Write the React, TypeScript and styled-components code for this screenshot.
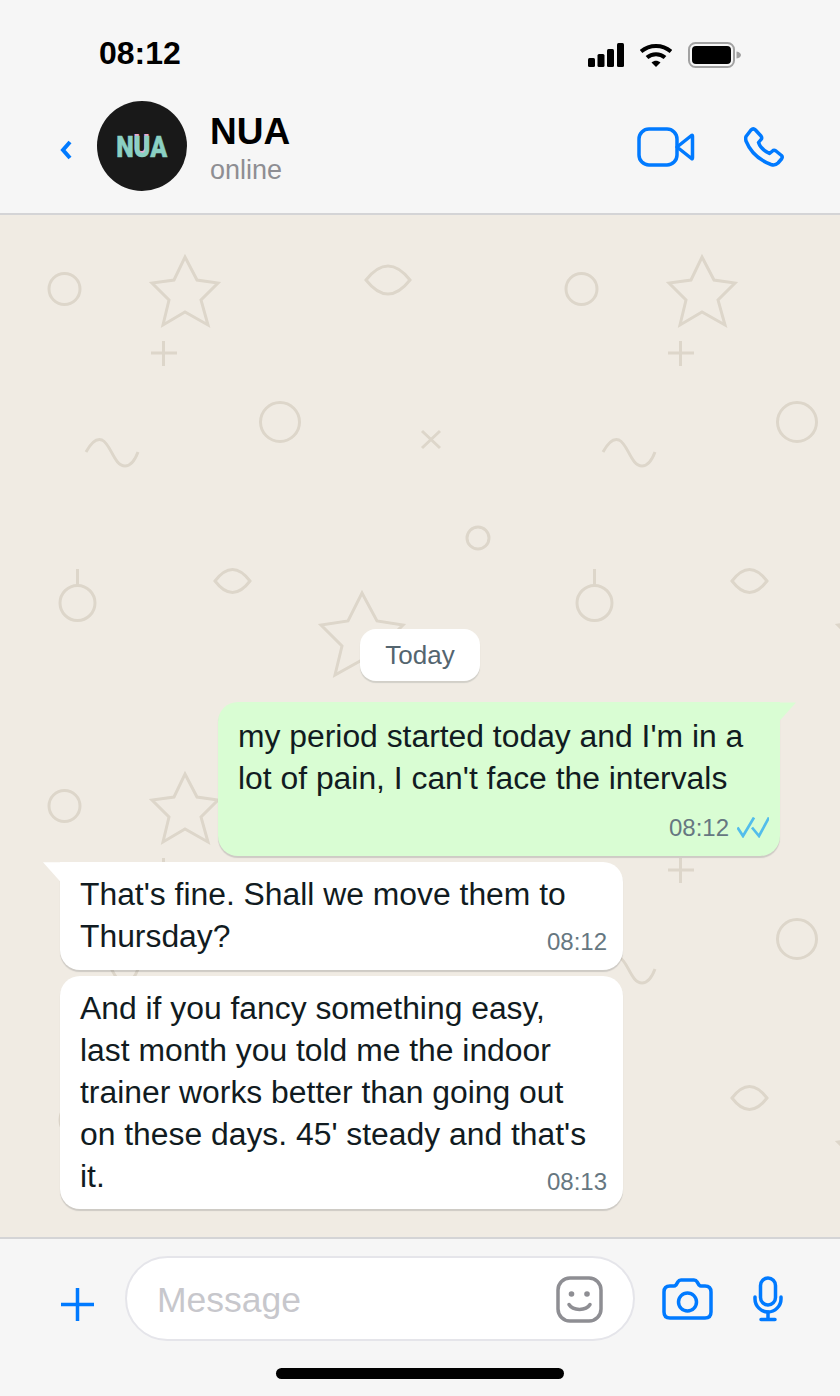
import styled, { createGlobalStyle } from 'styled-components';

const GlobalStyle = createGlobalStyle`
  html, body {
    margin: 0;
    padding: 0;
    background: #f6f6f6;
  }
  * {
    box-sizing: border-box;
  }
`;

const Screen = styled.div`
  width: 840px;
  height: 1396px;
  display: flex;
  flex-direction: column;
  overflow: hidden;
  font-family: 'Liberation Sans', Arial, sans-serif;
  background: #f6f6f6;
`;

const StatusBar = styled.div`
  height: 92px;
  flex: none;
  display: flex;
  align-items: flex-end;
  justify-content: space-between;
  padding: 0 99px 22px 99px;
`;

const Clock = styled.span`
  font-size: 32px;
  line-height: 34px;
  font-weight: 700;
  color: #000;
`;

const StatusIcons = styled.div`
  display: flex;
  align-items: center;
  gap: 16px;
  margin-bottom: 2px;
`;

const Header = styled.header`
  height: 123px;
  flex: none;
  display: flex;
  align-items: flex-start;
  padding: 9px 56px 0 60px;
  border-bottom: 2px solid #d4d4d6;
`;

const BackButton = styled.div`
  display: flex;
  width: 37px;
  padding-top: 38px;
`;

const Avatar = styled.div`
  width: 90px;
  height: 90px;
  flex: none;
  border-radius: 50%;
  background: #191919;
  display: flex;
  align-items: center;
  justify-content: center;
`;

const Logo = styled.div`
  display: flex;
  font-family: 'Roboto', 'Liberation Sans', sans-serif;
  font-weight: 900;
  font-size: 30px;
  line-height: 24px;
  color: #8bd0c3;
  -webkit-text-stroke: 0.5px #8bd0c3;
  transform: scaleX(0.83);
  margin-top: 2px;
`;

const LogoU = styled.span`
  text-shadow: -0.5px -2.5px 0 #eaa7d0;
`;

const Contact = styled.div`
  flex: 1;
  display: flex;
  flex-direction: column;
  padding: 11px 0 0 23px;
`;

const ContactName = styled.div`
  font-size: 37px;
  line-height: 40px;
  font-weight: 700;
  color: #000;
`;

const ContactStatus = styled.div`
  font-size: 27px;
  line-height: 37px;
  color: #8e8e93;
`;

const HeaderActions = styled.div`
  display: flex;
  align-items: center;
  gap: 49px;
  padding-top: 26px;
`;

const Chat = styled.main`
  position: relative;
  flex: 1;
  min-height: 0;
  display: flex;
  flex-direction: column;
  justify-content: flex-end;
  padding: 0 60px 28px;
  background: #f0ebe3;
`;

const Wallpaper = styled.svg`
  position: absolute;
  inset: 0;
  width: 100%;
  height: 100%;
`;

const DayPill = styled.div`
  position: relative;
  align-self: center;
  width: 120px;
  height: 52px;
  margin-bottom: 21px;
  border-radius: 16px;
  background: #fff;
  box-shadow: 0 2px 1px rgba(11, 20, 26, 0.13);
  color: #54656f;
  font-size: 26px;
  line-height: 52px;
  text-align: center;
`;

const Bubble = styled.div<{ $out?: boolean; $tail?: boolean }>`
  position: relative;
  display: flow-root;
  width: ${(p) => (p.$out ? '562px' : '563px')};
  margin-bottom: 6px;
  padding: ${(p) => (p.$out ? '13px 20px 11.600px' : '11px 20px 12px')};
  align-self: ${(p) => (p.$out ? 'flex-end' : 'flex-start')};
  border-radius: 20px;
  border-top-right-radius: ${(p) => (p.$out ? '0' : '20px')};
  border-top-left-radius: ${(p) => (p.$tail && !p.$out ? '0' : '20px')};
  background: ${(p) => (p.$out ? '#d9fdd3' : '#fff')};
  box-shadow: 0 2px 1px rgba(11, 20, 26, 0.15);
  color: #111b21;
  font-size: 31.850px;
  line-height: 42.100px;

  &::after {
    content: ${(p) => (p.$tail ? "''" : 'none')};
    position: absolute;
    top: 0;
    width: 17px;
    height: 19px;
    background: inherit;
    ${(p) =>
      p.$out
        ? 'right: -16px; clip-path: polygon(0 0, 100% 0, 0 100%);'
        : 'left: -17px; clip-path: polygon(0 0, 100% 0, 100% 100%);'}
  }

  &:last-child {
    margin-bottom: 0;
  }
`;

const Meta = styled.span<{ $out?: boolean }>`
  float: right;
  display: flex;
  align-items: center;
  gap: 8px;
  margin: ${(p) => (p.$out ? '14px -9px 3.200px 0' : '13px -4px 0 0')};
  font-size: 24px;
  line-height: 28px;
  color: #667781;
`;

const Composer = styled.footer`
  flex: none;
  height: 159px;
  position: relative;
  border-top: 2px solid #d4d4d6;
  display: flex;
  flex-direction: column;
`;

const ComposerRow = styled.div`
  display: flex;
  align-items: center;
  padding: 17px 0 0 61px;
`;

const PlusSlot = styled.div`
  display: flex;
  margin-top: 12px;
`;

const InputBox = styled.div`
  width: 510px;
  height: 85px;
  margin-left: 31px;
  margin-right: 27px;
  padding: 2px 30px 0;
  display: flex;
  align-items: center;
  justify-content: space-between;
  border: 2px solid #e5e5ea;
  border-radius: 43px;
  background: #fff;
`;

const Placeholder = styled.span`
  margin-top: 2px;
  font-size: 35.500px;
  color: #c7c7cc;
`;

const MicSlot = styled.div`
  display: flex;
  margin-left: 40px;
`;

const HomeBar = styled.div`
  width: 288px;
  height: 11px;
  margin: 27px auto 0;
  border-radius: 6px;
  background: #000;
`;

const Line = styled.path`
  fill: none;
  stroke: #ddd6ca;
  stroke-width: 3;
`;

const Ring = styled.circle`
  fill: none;
  stroke: #ddd6ca;
  stroke-width: 3;
`;

const Blue = '#007aff';

const starPoints = '185,257 197,280 218,283 201,300 208,325 185,312 163,325 169,300 152,283 174,280';
const bigStarPoints = '362,593 377,621 403,625 382,646 390,675 362,660 335,675 342,646 321,625 348,621';

const ChatWallpaper = () => (
  <Wallpaper aria-hidden="true">
    <defs>
      <pattern id="tile" width="517" height="517" patternUnits="userSpaceOnUse">
        <g transform="translate(0 -215)">
          <Ring cx="64.500" cy="289" r="15.500" />
          <polygon points={starPoints} fill="none" stroke="#ddd6ca" strokeWidth="3" />
          <Line d="M151 353h26M163.500 341v25" />
          <Line d="M366 280Q388 252 410 280Q388 308 366 280Z" />
          <Ring cx="280" cy="422" r="19.500" />
          <Line d="M86 452C92 441 97 438 102 440C111 444 114 466 125 466C131 466 135 460 138 452" />
          <Ring cx="77.500" cy="603" r="17.500" />
          <Line d="M77.500 569v16" />
          <Line d="M215 581Q232.500 558 250 581Q232.500 604 215 581Z" />
          <polygon points={bigStarPoints} fill="none" stroke="#ddd6ca" strokeWidth="3" />
          <Line d="M422 431l18 17M440 431l-18 17" />
          <Ring cx="478" cy="538" r="11" />
        </g>
      </pattern>
    </defs>
    <rect width="100%" height="100%" fill="url(#tile)" />
  </Wallpaper>
);

const SignalIcon = () => (
  <svg width="36" height="24" viewBox="0 0 36 24">
    <rect x="0" y="15" width="7" height="9" rx="1.500" />
    <rect x="9.500" y="11" width="7" height="13" rx="1.500" />
    <rect x="19" y="6" width="7" height="18" rx="1.500" />
    <rect x="29" y="0" width="7" height="24" rx="1.500" />
  </svg>
);

const WifiIcon = () => (
  <svg width="32" height="24" viewBox="0 0 32 24">
    <path d="M1 8.500C9.500 1 22.500 1 31 8.500" fill="none" stroke="#000" strokeWidth="4" />
    <path d="M7 14.500C12 10 20 10 25 14.500" fill="none" stroke="#000" strokeWidth="4" />
    <path d="M11.500 19.500C14.500 17 17.500 17 20.500 19.500L16 24Z" />
  </svg>
);

const BatteryIcon = () => (
  <svg width="53" height="26" viewBox="0 0 53 26">
    <rect x="1" y="1" width="45" height="24" rx="6.500" fill="none" stroke="#a2a2a2" strokeWidth="2" />
    <rect x="4" y="4" width="39" height="18" rx="4" />
    <path d="M48.500 9.500C51.500 10 53 11.500 53 13C53 14.500 51.500 16 48.500 16.500Z" fill="#a2a2a2" />
  </svg>
);

const BackIcon = () => (
  <svg width="12" height="22" viewBox="0 0 12 22">
    <path d="M10 3L3 11L10 19" fill="none" stroke={Blue} strokeWidth="4" />
  </svg>
);

const VideoIcon = () => (
  <svg width="58" height="40" viewBox="0 0 58 40" fill="none" stroke={Blue} strokeWidth="3.500" strokeLinejoin="round">
    <rect x="2" y="2" width="38" height="36" rx="10" />
    <path d="M40 20L54.500 8.500C55.300 8 55.500 8.500 55.500 9.500V30.500C55.500 31.500 55.300 32 54.500 31.500Z" />
  </svg>
);

const PhoneIcon = () => (
  <svg width="40" height="40" viewBox="0 0 40 40" fill="none" stroke={Blue} strokeWidth="3.500" strokeLinejoin="round">
    <path d="M2 9.500L7 3C8.500 1.500 10 1.500 11.500 3L17 9C18 10.500 18 11.500 17 12.500L14.500 15.500C16 20 20 24 25.500 26.500L28.500 24C29.500 23 30.500 23 32 24L37.500 28.500C38.500 29.500 38.500 30.500 37.500 32L34 36C32.500 37.500 30 38.500 27 37.500C15 33 6 24 2 14C1.500 12 1.500 11 2 9.500Z" />
  </svg>
);

const PlusIcon = () => (
  <svg width="33" height="33" viewBox="0 0 33 33">
    <path d="M16.500 0V33M0 16.500H33" stroke={Blue} strokeWidth="3.500" />
  </svg>
);

const SmileyIcon = () => (
  <svg width="47" height="47" viewBox="0 0 47 47" fill="none" stroke="#8e8e93" strokeWidth="3.500">
    <rect x="2" y="2" width="43" height="43" rx="12" />
    <path d="M13 28.500C17 35 30 35 34 28.500" strokeLinecap="round" />
    <circle cx="15.500" cy="18" r="2.800" fill="#8e8e93" stroke="none" />
    <circle cx="31" cy="18" r="2.800" fill="#8e8e93" stroke="none" />
  </svg>
);

const CameraIcon = () => (
  <svg width="51" height="42" viewBox="0 0 51 42" fill="none" stroke={Blue} strokeWidth="3.500" strokeLinejoin="round">
    <path d="M8 8H12C13 8 13.500 7.500 14 7L16 3.800C16.500 2.800 17.500 2 19 2H32C33.500 2 34.500 2.800 35 3.800L37 7C37.500 7.500 38 8 39 8H43C47 8 49 10 49 14V34C49 38 47 40 43 40H8C4 40 2 38 2 34V14C2 10 4 8 8 8Z" />
    <circle cx="25.500" cy="24" r="9" />
  </svg>
);

const MicIcon = () => (
  <svg width="30" height="46" viewBox="0 0 30 46" fill="none" stroke={Blue} strokeWidth="3.500" strokeLinecap="round">
    <rect x="7.500" y="2" width="15" height="27" rx="7.500" />
    <path d="M2 21V23C2 30 8 36 15 36C22 36 28 30 28 23V21" />
    <path d="M15 36V43.500M8 43.500H22" />
  </svg>
);

const ChecksIcon = () => (
  <svg width="32" height="21" viewBox="0 0 32 21" fill="none" stroke="#53bdeb" strokeWidth="2.700">
    <path d="M0.500 10.500L6 19L17 0.500" />
    <path d="M15 10.500L22 19L32 0.500" />
  </svg>
);

const App = () => (
  <>
    <GlobalStyle />
    <Screen>
      <StatusBar>
        <Clock>08:12</Clock>
        <StatusIcons>
          <SignalIcon />
          <WifiIcon />
          <BatteryIcon />
        </StatusIcons>
      </StatusBar>
      <Header>
        <BackButton>
          <BackIcon />
        </BackButton>
        <Avatar>
          <Logo>
            N<LogoU>U</LogoU>A
          </Logo>
        </Avatar>
        <Contact>
          <ContactName>NUA</ContactName>
          <ContactStatus>online</ContactStatus>
        </Contact>
        <HeaderActions>
          <VideoIcon />
          <PhoneIcon />
        </HeaderActions>
      </Header>
      <Chat>
        <ChatWallpaper />
        <DayPill>Today</DayPill>
        <Bubble $out $tail>
          my period started today and I'm in a lot of pain, I can't face the intervals
          <Meta $out>
            08:12
            <ChecksIcon />
          </Meta>
        </Bubble>
        <Bubble $tail>
          That's fine. Shall we move them to Thursday?
          <Meta>08:12</Meta>
        </Bubble>
        <Bubble>
          And if you fancy something easy, last month you told me the indoor trainer works better than going out on these days. 45' steady and that's it.
          <Meta>08:13</Meta>
        </Bubble>
      </Chat>
      <Composer>
        <ComposerRow>
          <PlusSlot>
            <PlusIcon />
          </PlusSlot>
          <InputBox>
            <Placeholder>Message</Placeholder>
            <SmileyIcon />
          </InputBox>
          <CameraIcon />
          <MicSlot>
            <MicIcon />
          </MicSlot>
        </ComposerRow>
        <HomeBar />
      </Composer>
    </Screen>
  </>
);

export default App;
